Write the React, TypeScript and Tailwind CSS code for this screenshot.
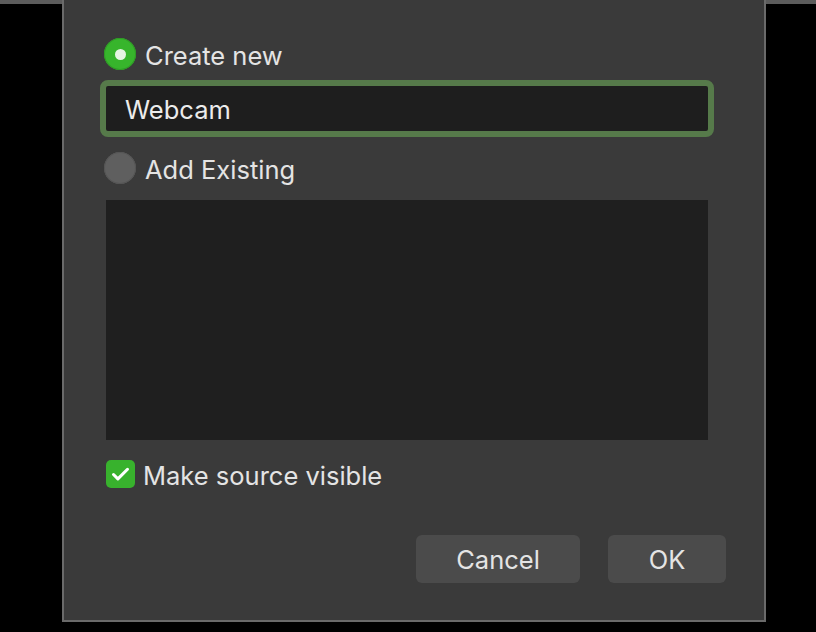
import { Check } from 'lucide-react';

function Radio({ checked, label }: { checked: boolean; label: string }) {
  return (
    <div className="flex items-center gap-[9px] h-[32px]">
      {checked ? (
        <div className="w-[32px] h-[32px] rounded-full bg-[#37b52c] flex items-center justify-center shadow-[inset_0_0_0_1px_#2f9a26]">
          <div className="w-[11px] h-[11px] rounded-full bg-[#e6f5e3]" />
        </div>
      ) : (
        <div className="w-[32px] h-[32px] rounded-full bg-[#5f5f5f] shadow-[inset_0_0_0_1px_#555]" />
      )}
      <span className="text-[25.5px] text-[#e4e4e4] leading-none pt-[3px]">{label}</span>
    </div>
  );
}

export default function App() {
  return (
    <div
      className="relative w-[816px] h-[632px] bg-black overflow-hidden"
      style={{ fontFamily: 'Inter, "Liberation Sans", sans-serif' }}
    >
      <div className="absolute top-0 left-0 w-full h-[4px] bg-[#5c5c5c]" />
      <div className="relative ml-[62px] w-[704px] h-[622px] bg-[#3a3a3a] border-2 border-t-0 border-[#6a6a6a] flex flex-col">
        <div className="ml-[40px] mt-[38px]">
          <Radio checked label="Create new" />
        </div>
        <div className="ml-[36px] mt-[10px] w-[614px] h-[57px] rounded-[8px] border-[6px] border-[#567a4a] bg-[#1e1e1e] flex items-center pl-[19px]">
          <span className="text-[25.5px] text-[#ececec] leading-none pt-[2px]">Webcam</span>
        </div>
        <div className="ml-[40px] mt-[15px]">
          <Radio checked={false} label="Add Existing" />
        </div>
        <div className="ml-[42px] mt-[16px] w-[602px] h-[240px] bg-[#1f1f1f]" />
        <div className="ml-[42px] mt-[20px] flex items-center gap-[8px]">
          <div className="w-[29px] h-[28px] rounded-[5px] bg-[#38b22d] flex items-center justify-center">
            <Check className="w-[21px] h-[21px] text-white" strokeWidth={3.5} />
          </div>
          <span className="text-[25.5px] text-[#e4e4e4] leading-none pt-[3px]">Make source visible</span>
        </div>
        <div className="mt-[46px] flex justify-end gap-[28px] mr-[38px]">
          <button className="w-[164px] h-[48px] rounded-[6px] bg-[#4b4b4b] text-[25.5px] text-[#e4e4e4] pt-[3px]">
            Cancel
          </button>
          <button className="w-[118px] h-[48px] rounded-[6px] bg-[#4b4b4b] text-[25.5px] text-[#e4e4e4] pt-[3px]">
            OK
          </button>
        </div>
      </div>
    </div>
  );
}
